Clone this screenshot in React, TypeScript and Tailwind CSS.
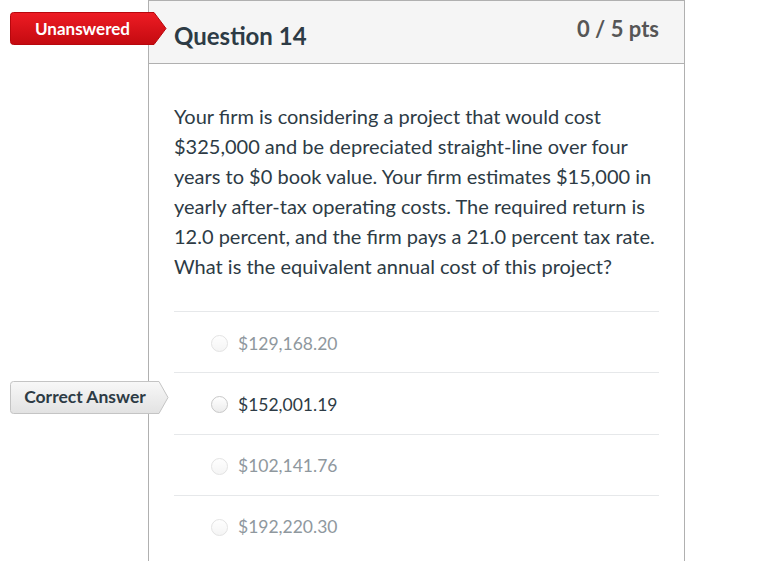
import React from "react";

const answers = [
  { text: "$129,168.20", faded: true },
  { text: "$152,001.19", faded: false },
  { text: "$102,141.76", faded: true },
  { text: "$192,220.30", faded: true },
];

function Badge({
  label,
  variant,
  className,
}: {
  label: string;
  variant: "red" | "gray";
  className: string;
}) {
  const red = variant === "red";
  const w = red ? 157 : 159;
  const h = 33;
  const a = red ? 12 : 9;
  return (
    <div className={`absolute ${className}`} style={{ width: w, height: h }}>
      <svg width={w} height={h} className="absolute inset-0" viewBox={`0 0 ${w} ${h}`}>
        <defs>
          <linearGradient id={`g-${variant}`} x1="0" y1="0" x2="0" y2="1">
            {red ? (
              <>
                <stop offset="0" stopColor="#ee1c24" />
                <stop offset="1" stopColor="#c40a10" />
              </>
            ) : (
              <>
                <stop offset="0" stopColor="#f8f8f8" />
                <stop offset="1" stopColor="#e2e2e2" />
              </>
            )}
          </linearGradient>
        </defs>
        <path
          d={`M3.5 0.5 H${w - a - 1} L${w - 1} ${h / 2} L${w - a - 1} ${h - 0.5} H3.5 Q0.5 ${h - 0.5} 0.5 ${h - 3.5} V3.5 Q0.5 0.5 3.5 0.5 Z`}
          fill={`url(#g-${variant})`}
          stroke={red ? "#b8070d" : "#c4c4c4"}
          strokeWidth="1"
        />
      </svg>
      <div
        className={`relative flex h-full items-center justify-center font-bold ${
          red ? "text-[17px] text-white" : "text-[17.5px] text-[#2d3b45]"
        }`}
        style={{ paddingRight: a }}
      >
        {label}
      </div>
    </div>
  );
}

export default function App() {
  return (
    <div
      className="relative h-[561px] w-[768px] overflow-hidden bg-white"
      style={{ fontFamily: "Lato, 'Open Sans', sans-serif" }}
    >
      <Badge label="Unanswered" variant="red" className="left-[10px] top-[12px]" />
      <Badge label="Correct Answer" variant="gray" className="left-[10px] top-[381px]" />

      <div className="ml-[148px] w-[537px] border border-[#b0b0b0] min-h-[600px]">
        <div className="flex h-[63px] items-start justify-between border-b border-[#b0b0b0] bg-[#f5f5f5] pl-[25px] pr-[25px]">
          <h2 className="pt-[20px] text-[24px] font-bold leading-[30px] text-[#2d3b45]">
            Question 14
          </h2>
          <div className="pt-[13px] text-[22px] font-bold leading-[30px] text-[#565656]">
            0 / 5 pts
          </div>
        </div>

        <div className="px-[25px] pt-[37px]">
          <p className="text-[20px] leading-[30px] text-[#2d3b45]">
            Your firm is considering a project that would cost
            <br />
            $325,000 and be depreciated straight-line over four
            <br />
            years to $0 book value. Your firm estimates $15,000 in
            <br />
            yearly after-tax operating costs. The required return is
            <br />
            12.0 percent, and the firm pays a 21.0 percent tax rate.
            <br />
            What is the equivalent annual cost of this project?
          </p>

          <div className="mt-[30px]">
            {answers.map((a) => (
              <div
                key={a.text}
                className="flex h-[61.3px] items-center border-t border-[#e6e8ea] pl-[37px] pt-[3px]"
              >
                <span
                  className={`h-[17px] w-[17px] shrink-0 rounded-full border border-[#c8c8c8] bg-gradient-to-b from-white to-[#ececec] ${
                    a.faded ? "opacity-50" : ""
                  }`}
                />
                <span
                  className={`ml-[10px] text-[17.5px] ${
                    a.faded ? "text-[#8f989e]" : "text-[#2d3b45]"
                  }`}
                >
                  {a.text}
                </span>
              </div>
            ))}
          </div>
        </div>
      </div>
    </div>
  );
}
